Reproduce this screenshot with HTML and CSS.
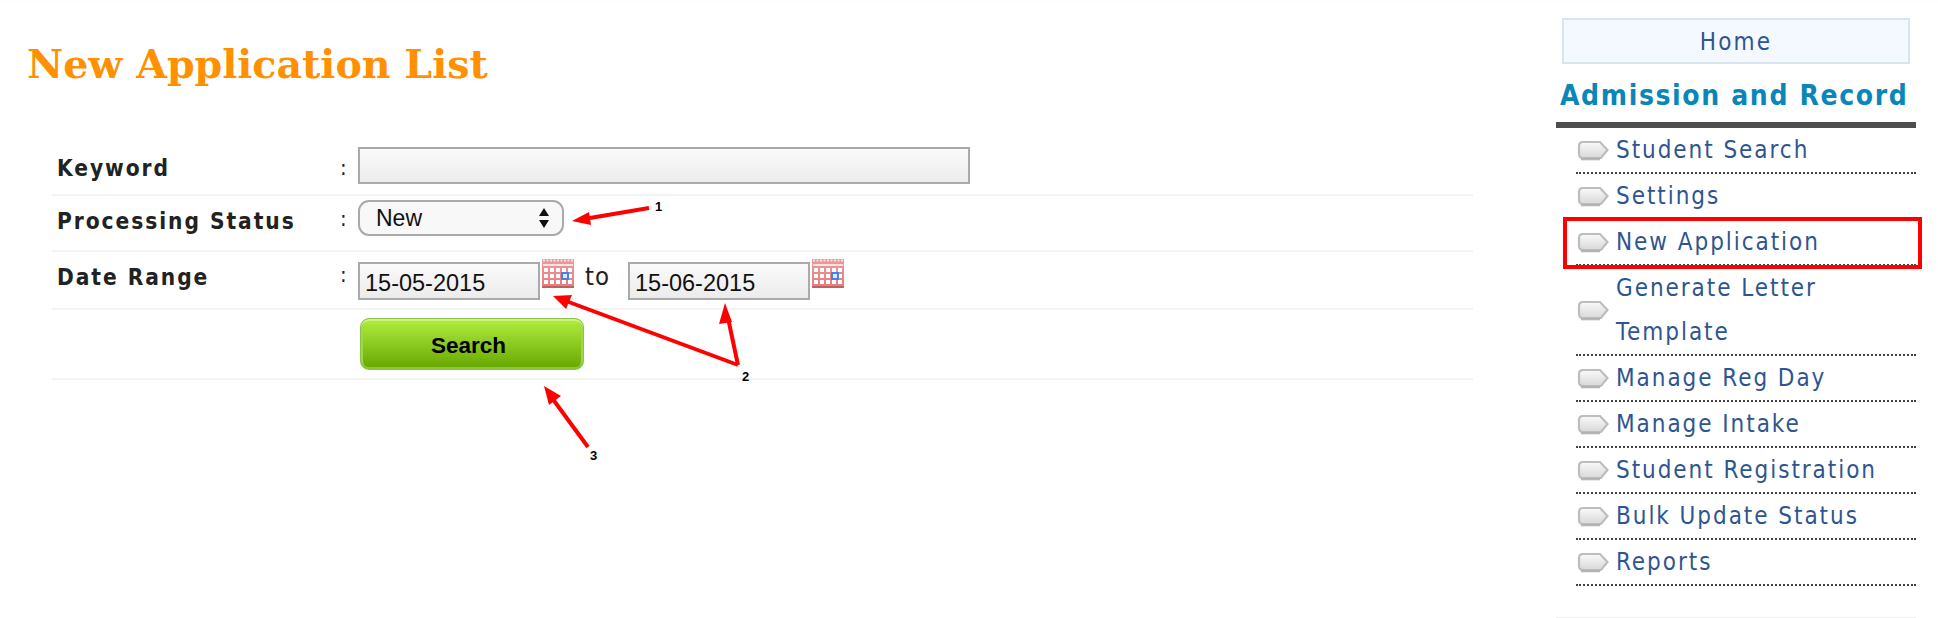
FILE: index.html
```
<!DOCTYPE html>
<html lang="en">
<head>
<meta charset="utf-8">
<title>New Application List</title>
<link rel="stylesheet" href="styles.css">
</head>
<body>
<svg class="defs" width="0" height="0" aria-hidden="true">
  <defs>
    <linearGradient id="calbg" x1="0" y1="0" x2="0" y2="1">
      <stop offset="0" stop-color="#f09a9a"/><stop offset="1" stop-color="#e67c7c"/>
    </linearGradient>
    <linearGradient id="bulletbg" x1="0" y1="0" x2="0" y2="1">
      <stop offset="0" stop-color="#fafafa"/><stop offset="1" stop-color="#d8d8d8"/>
    </linearGradient>
    <symbol id="cal" viewBox="0 0 32 30">
      <rect x="0" y="1" width="32" height="29" fill="url(#calbg)"/>
      <rect x="0" y="28" width="32" height="2" fill="#c06060"/>
      <path d="M1 2.5h30" stroke="#fbe0e0" stroke-width="2" stroke-dasharray="2 1.5"/>
      <rect x="1" y="6" width="30" height="2" fill="#fff" opacity=".75"/>
      <g fill="#fff">
        <rect x="2" y="10" width="4" height="4"/><rect x="8" y="10" width="4" height="4"/><rect x="14" y="10" width="4" height="4"/><rect x="20" y="10" width="4" height="4"/><rect x="26" y="10" width="4" height="4"/>
        <rect x="2" y="16" width="4" height="4"/><rect x="8" y="16" width="4" height="4"/><rect x="14" y="16" width="4" height="4"/><rect x="26" y="16" width="4" height="4"/>
        <rect x="2" y="22" width="4" height="4"/><rect x="8" y="22" width="4" height="4"/><rect x="14" y="22" width="4" height="4"/><rect x="20" y="22" width="4" height="4"/><rect x="26" y="22" width="4" height="4"/>
      </g>
      <rect x="20" y="15" width="6" height="6" fill="#dfe9ff" stroke="#4a7fe0" stroke-width="2"/>
    </symbol>
    <symbol id="bullet" viewBox="0 0 32 21">
      <path d="M6 2H23L30.5 10L24 18H6Q2 18 2 14V6Q2 2 6 2Z" fill="url(#bulletbg)" stroke="#bdbdbd" stroke-width="2.2"/>
      <path d="M4 19.4H23" stroke="#999" stroke-width="1.8" opacity=".7"/>
    </symbol>
  </defs>
</svg>
<div class="page">
  <main class="main">
    <h1 class="title">New Application List</h1>
    <form class="form">
      <div class="row row-first">
        <label class="label">Keyword</label><span class="colon">:</span>
        <div class="field"><input class="input input-wide" type="text"></div>
      </div>
      <div class="row">
        <label class="label">Processing Status</label><span class="colon">:</span>
        <div class="field">
          <div class="select">New<svg class="updown" width="10" height="20" viewBox="0 0 10 20"><path d="M5 0L10 8H0ZM5 20L0 12H10Z" fill="#111"/></svg></div>
        </div>
      </div>
      <div class="row row-date">
        <label class="label">Date Range</label><span class="colon">:</span>
        <div class="field field-date">
          <input class="input input-date" type="text" value="15-05-2015">
          <svg class="cal" width="32" height="30"><use href="#cal"/></svg>
          <span class="to">to</span>
          <input class="input input-date" type="text" value="15-06-2015">
          <svg class="cal" width="32" height="30"><use href="#cal"/></svg>
        </div>
      </div>
      <div class="row row-btn">
        <span class="label"></span><span class="colon"></span>
        <div class="field"><button class="btn" type="button">Search</button></div>
      </div>
    </form>
  </main>
  <aside class="side">
    <a class="home">Home</a>
    <h2 class="side-title">Admission and Record</h2>
    <ul class="menu">
      <li class="item"><svg class="bullet" width="32" height="21"><use href="#bullet"/></svg><span>Student Search</span></li>
      <li class="item"><svg class="bullet" width="32" height="21"><use href="#bullet"/></svg><span>Settings</span></li>
      <li class="item"><svg class="bullet" width="32" height="21"><use href="#bullet"/></svg><span>New Application</span></li>
      <li class="item"><svg class="bullet" width="32" height="21"><use href="#bullet"/></svg><span>Generate Letter<br>Template</span></li>
      <li class="item"><svg class="bullet" width="32" height="21"><use href="#bullet"/></svg><span>Manage Reg Day</span></li>
      <li class="item"><svg class="bullet" width="32" height="21"><use href="#bullet"/></svg><span>Manage Intake</span></li>
      <li class="item"><svg class="bullet" width="32" height="21"><use href="#bullet"/></svg><span>Student Registration</span></li>
      <li class="item"><svg class="bullet" width="32" height="21"><use href="#bullet"/></svg><span>Bulk Update Status</span></li>
      <li class="item"><svg class="bullet" width="32" height="21"><use href="#bullet"/></svg><span>Reports</span></li>
    </ul>
    <div class="side-foot"></div>
  </aside>
</div>
<svg class="notes" width="1938" height="618" viewBox="0 0 1938 618">
  <g stroke="#f00" stroke-width="4" fill="none">
    <path d="M649 208L584 219"/>
    <path d="M738 365L566 301"/>
    <path d="M738 365L728 318"/>
    <path d="M588 447L552 398"/>
  </g>
  <g fill="#f00">
    <path d="M572 221L589 212L591 225Z"/>
    <path d="M553 296L572 295L566 309Z"/>
    <path d="M725 303L732 322L719 324Z"/>
    <path d="M544 386L561 396L549 405Z"/>
  </g>
  <g class="note-num">
    <text x="655" y="211">1</text>
    <text x="742" y="381">2</text>
    <text x="590" y="460">3</text>
  </g>
  <rect class="hilite" x="1565" y="219" width="355" height="48"/>
</svg>
</body>
</html>
```
FILE: styles.css
```
* { box-sizing: border-box; }
html, body { margin: 0; padding: 0; }
body {
  width: 1938px;
  height: 618px;
  overflow: hidden;
  background: #fff;
  font-family: "DejaVu Sans Condensed", "DejaVu Sans", sans-serif;
  position: relative;
}
.defs { position: absolute; }
.page {
  display: flex;
  height: 618px;
  border-top: 2px solid #fffdf8;
}
.main { width: 1556px; padding: 0 83px 0 27px; }
.title {
  margin: 39px 0 0;
  height: 99px;
  font: bold 39.6px/46px "DejaVu Serif", serif;
  color: #ff9000;
  white-space: nowrap;
}
.form { margin-left: 25px; }
.row {
  display: flex;
  height: 56px;
  border-bottom: 2px solid #f3f3f3;
}
.row-first { padding-top: 4px; }
.row-date { height: 58px; }
.row-btn { height: 70px; }
.label {
  width: 288px;
  padding: 12px 0 0 5px;
  font-size: 22.5px;
  line-height: 26px;
  font-weight: bold;
  letter-spacing: 1.95px;
  color: #222;
}
.row-first .label, .row-first .colon { padding-top: 11px; }
.colon { width: 18px; padding-top: 10px; font-size: 22px; line-height: 26px; color: #222; }
.field { padding-top: 4px; }
.row-first .field { padding-top: 3px; }
.field-date { display: flex; align-items: flex-start; padding-top: 10px; }
.input {
  display: block;
  height: 38px;
  border: 2px solid #aaa;
  border-radius: 0;
  padding: 5px 5px 0;
  background: linear-gradient(#fafafa, #ececec);
  font: 23.5px "Liberation Sans", sans-serif;
  color: #111;
}
.input-wide { width: 612px; height: 37px; }
.input-date { width: 182px; }
.cal { margin: -4px 0 0 2px; display: block; }
.to { width: 54px; padding-left: 11px; font-size: 25.5px; line-height: 28px; letter-spacing: 0.9px; color: #222; }
.select {
  position: relative;
  width: 206px;
  height: 36px;
  border: 2px solid #aaa;
  border-radius: 11px;
  padding-left: 16px;
  background: #f8f8f8;
  font: 23px/33px "Liberation Sans", sans-serif;
  color: #111;
}
.updown { position: absolute; right: 13px; top: 6px; }
.btn {
  display: block;
  width: 224px;
  height: 52px;
  margin: 4px 0 0 2px;
  padding: 4px 7px 0 0;
  border: 1px solid #8dc24a;
  border-radius: 9px;
  background: linear-gradient(#b0ee40, #66a600);
  box-shadow: inset 0 2px 0 #c8f57a, inset 0 -2px 0 #8cc63a, inset 2px 0 0 #9cd84a, inset -2px 0 0 #9cd84a;
  font: bold 22.5px "Liberation Sans", sans-serif;
  color: #000;
}
.side { width: 360px; }
.home {
  display: block;
  width: 348px;
  height: 46px;
  margin: 16px 0 0 6px;
  border: 2px solid #d8e4f0;
  background: #f4f8ff;
  text-align: center;
  font-size: 24px;
  line-height: 44px;
  letter-spacing: 2.2px;
  color: #2f5590;
}
.side-title {
  margin: 15px 0 0 4px;
  height: 43px;
  font-size: 28px;
  line-height: 34px;
  font-weight: bold;
  letter-spacing: 1.62px;
  color: #0a86b8;
  white-space: nowrap;
}
.menu {
  list-style: none;
  margin: 0;
  padding: 0 0 0 20px;
  border-top: 6px solid #4d4d4d;
}
.item {
  display: flex;
  align-items: center;
  border-bottom: 2px dotted #444;
  font-size: 24px;
  line-height: 44px;
  letter-spacing: 1.95px;
  color: #2f5590;
}
.bullet { flex: none; margin: 0 7px 0 1px; }
.side-foot { height: 2px; margin-top: 31px; background: #eee; }
.notes { position: absolute; left: 0; top: 0; pointer-events: none; }
.note-num { font: bold 13px "Liberation Sans", sans-serif; fill: #000; }
.hilite { fill: none; stroke: #f00; stroke-width: 4; }
```
